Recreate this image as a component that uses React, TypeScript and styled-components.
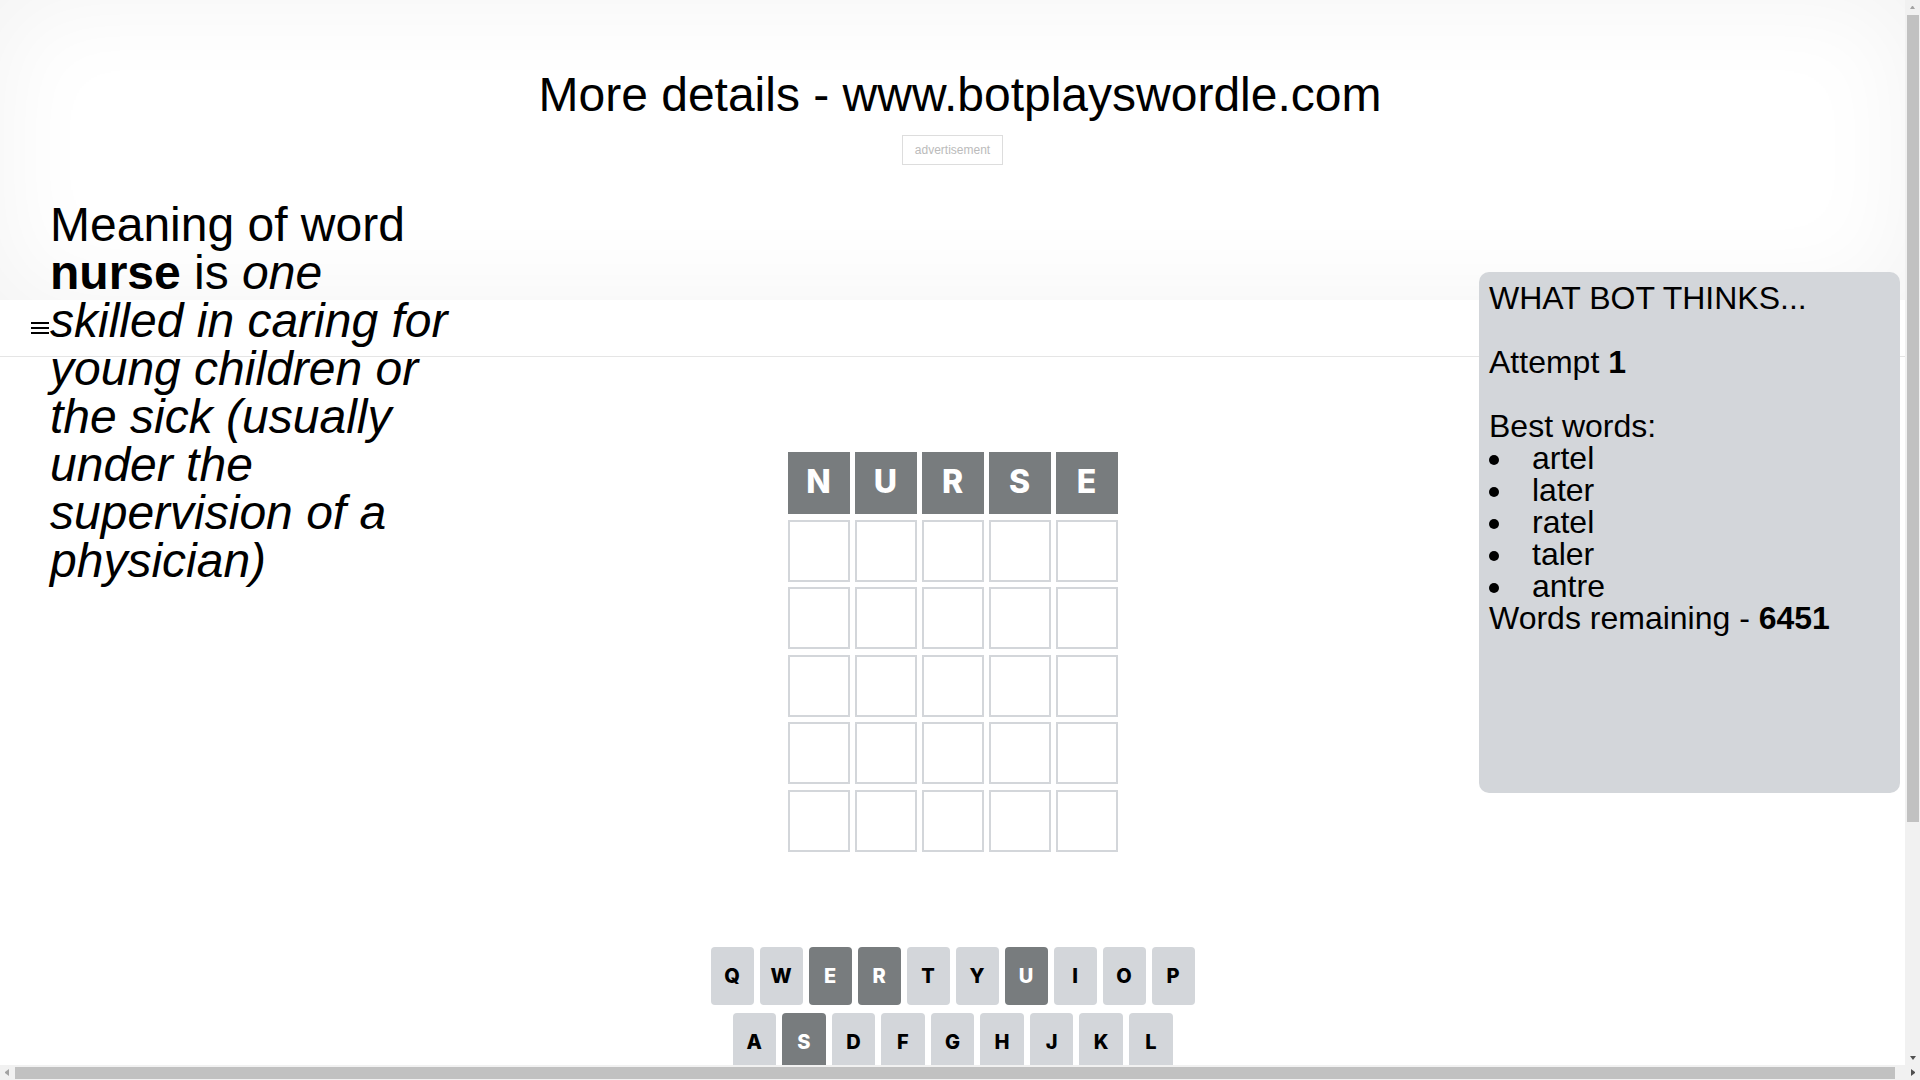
import React from "react";
import styled, { createGlobalStyle } from "styled-components";

const GlobalStyle = createGlobalStyle`
  *, *::before, *::after { box-sizing: border-box; }
  body { margin: 0; background: #fff; color: #000; font-family: "Liberation Sans", Arial, sans-serif; overflow: hidden; }
`;

const Window = styled.div`
  display: grid;
  grid-template: minmax(0, 1fr) 15px / minmax(0, 1fr) 15px;
  height: 100vh;
`;

const Viewport = styled.div`
  position: relative;
  overflow: hidden;
`;

const Banner = styled.header`
  display: flex;
  flex-direction: column;
  align-items: center;
  height: 300px;
  padding-top: 71px;
  box-shadow: inset 0 0 100px rgba(0, 0, 0, 0.05);
`;

const Title = styled.h1`
  margin: 0;
  padding-left: 15px;
  font-size: 48px;
  font-weight: 400;
  line-height: 48px;
`;

const AdLabel = styled.div`
  margin-top: 16px;
  padding: 0 12px;
  border: 1px solid #ddd;
  color: #bbb;
  font-size: 12px;
  line-height: 28px;
`;

const Meaning = styled.p`
  position: absolute;
  top: 201px;
  left: 50px;
  width: 400px;
  margin: 0;
  font-size: 48px;
  line-height: 48px;
`;

const Thoughts = styled.aside`
  position: absolute;
  top: 272px;
  right: 5px;
  width: 421px;
  height: 521px;
  padding: 10px;
  border-radius: 10px;
  background: #d3d6da;
  font-size: 32px;
  line-height: 32px;

  p { margin: 0; }
  p + p { margin-top: 32px; }
`;

const WordList = styled.ul`
  margin: 0;
  padding: 0;
  list-style: disc inside;
`;

const Toolbar = styled.nav`
  display: flex;
  align-items: center;
  height: 57px;
  padding: 0 28px;
  border-bottom: 1px solid #e5e5e5;
`;

const MenuButton = styled.button`
  display: flex;
  padding: 0;
  border: 0;
  background: none;
`;

const BoardArea = styled.main`
  display: flex;
  justify-content: center;
  padding: 95px 0;
`;

const Board = styled.div`
  display: grid;
  grid-template-rows: repeat(6, 1fr);
  gap: 5px;
  width: 330px;
  height: 400px;
`;

const BoardRow = styled.div`
  display: grid;
  grid-template-columns: repeat(5, 1fr);
  gap: 5px;
`;

const Tile = styled.div<{ $filled: boolean }>`
  display: flex;
  align-items: center;
  justify-content: center;
  height: 62px;
  padding-bottom: 2px;
  border: ${(p) => (p.$filled ? "0" : "2px solid #d3d6da")};
  background: ${(p) => (p.$filled ? "#787c7e" : "#fff")};
  color: #fff;
  font: 800 32px/32px Inter, "Liberation Sans", sans-serif;
`;

const Keyboard = styled.section`
  display: grid;
  gap: 8px;
  width: 484px;
  margin: 0 auto;
`;

const KeyRow = styled.div<{ $inset: boolean }>`
  display: flex;
  gap: 6px;
  padding: 0 ${(p) => (p.$inset ? "22px" : "0")};
`;

const Key = styled.button<{ $used: boolean }>`
  flex: 1;
  height: 58px;
  padding: 0;
  border: 0;
  border-radius: 4px;
  background: ${(p) => (p.$used ? "#787c7e" : "#d3d6da")};
  color: ${(p) => (p.$used ? "#fff" : "#000")};
  font: 800 20px/20px Inter, "Liberation Sans", sans-serif;
`;

const ScrollTrack = styled.div<{ $horizontal?: boolean }>`
  display: flex;
  flex-direction: ${(p) => (p.$horizontal ? "row" : "column")};
  grid-column: ${(p) => (p.$horizontal ? "1 / -1" : "auto")};
  background: #f1f1f1;
`;

const ScrollArrow = styled.svg`
  flex: none;
  width: 15px;
  height: 15px;
`;

const ScrollLane = styled.div<{ $horizontal?: boolean }>`
  flex: 1;
  padding: ${(p) => (p.$horizontal ? "2px 0 1px" : "0 1px 0 2px")};
`;

const ScrollThumb = styled.div<{ $w: string; $h: string }>`
  width: ${(p) => p.$w};
  height: ${(p) => p.$h};
  background: #c1c1c1;
`;

const guesses = ["NURSE", "", "", "", "", ""];
const keyRows = ["QWERTYUIOP", "ASDFGHJKL"];
const bestWords = ["artel", "later", "ratel", "taler", "antre"];

export default function App() {
  return (
    <Window>
      <GlobalStyle />
      <Viewport>
        <Banner>
          <Title>More details - www.botplayswordle.com</Title>
          <AdLabel>advertisement</AdLabel>
        </Banner>
        <Toolbar>
          <MenuButton aria-label="Menu">
            <svg width="24" height="24" viewBox="0 0 24 24">
              <path d="M3 18h18v-2H3v2zm0-5h18v-2H3v2zm0-7v2h18V6H3z" />
            </svg>
          </MenuButton>
        </Toolbar>
        <BoardArea>
          <Board>
            {guesses.map((guess, r) => (
              <BoardRow key={r}>
                {Array.from({ length: 5 }, (_, c) => (
                  <Tile key={c} $filled={Boolean(guess[c])}>{guess[c]}</Tile>
                ))}
              </BoardRow>
            ))}
          </Board>
        </BoardArea>
        <Keyboard>
          {keyRows.map((row, i) => (
            <KeyRow key={row} $inset={i === 1}>
              {row.split("").map((letter) => (
                <Key key={letter} $used={guesses[0].includes(letter)}>{letter}</Key>
              ))}
            </KeyRow>
          ))}
        </Keyboard>
        <Meaning>
          Meaning of word <b>nurse</b> is{" "}
          <i>one skilled in caring for young children or the sick (usually under the supervision of a physician)</i>
        </Meaning>
        <Thoughts>
          <p>WHAT BOT THINKS...</p>
          <p>Attempt <b>1</b></p>
          <p>Best words:</p>
          <WordList>
            {bestWords.map((word) => (
              <li key={word}>{word}</li>
            ))}
          </WordList>
          <p>Words remaining - <b>6451</b></p>
        </Thoughts>
      </Viewport>
      <ScrollTrack>
        <ScrollArrow viewBox="0 0 15 15"><path d="M5 9h5L8 6H7z" fill="#a3a3a3" /></ScrollArrow>
        <ScrollLane><ScrollThumb $w="100%" $h="78%" /></ScrollLane>
        <ScrollArrow viewBox="0 0 15 15"><path d="M5 6h6L8 10z" fill="#505050" /></ScrollArrow>
      </ScrollTrack>
      <ScrollTrack $horizontal>
        <ScrollArrow viewBox="0 0 15 15"><path d="M9 4v7L5 8V7z" fill="#a3a3a3" /></ScrollArrow>
        <ScrollLane $horizontal><ScrollThumb $w="calc(100% - 10px)" $h="100%" /></ScrollLane>
        <ScrollArrow viewBox="0 0 15 15"><path d="M6 4v7l4-3V7z" fill="#505050" /></ScrollArrow>
      </ScrollTrack>
    </Window>
  );
}
